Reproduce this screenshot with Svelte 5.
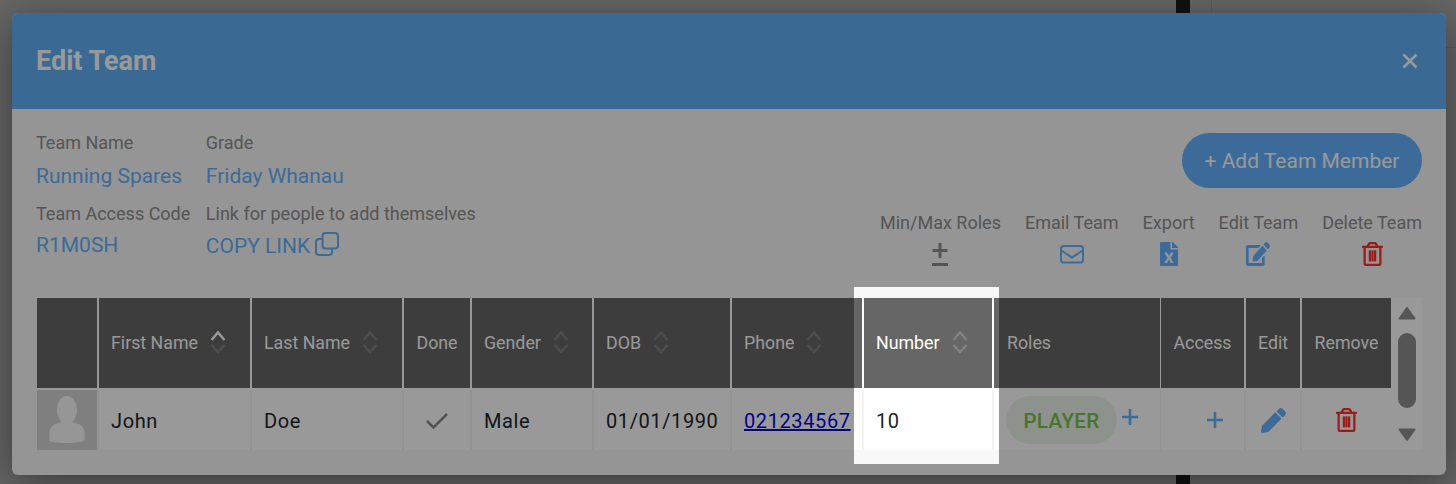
<script>
  const sortCols = new Set(['First Name','Last Name','Gender','DOB','Phone','Number']);
  const heads = [
    { t: '', c: 'avatar-h' },
    { t: 'First Name', active: true },
    { t: 'Last Name' },
    { t: 'Done', c: 'ctr' },
    { t: 'Gender' },
    { t: 'DOB' },
    { t: 'Phone' },
    { t: 'Number', c: 'num' },
    { t: 'Roles', c: 'rh' },
    { t: 'Access', c: 'ctr access' },
    { t: 'Edit', c: 'ctr' },
    { t: 'Remove', c: 'ctr' }
  ];
  const actions = ['Min/Max Roles', 'Email Team', 'Export', 'Edit Team', 'Delete Team'];
  const trash = "M268 416h24a12 12 0 0 0 12-12V188a12 12 0 0 0-12-12h-24a12 12 0 0 0-12 12v216a12 12 0 0 0 12 12zM432 80h-82.41l-34-56.7A48 48 0 0 0 274.41 0H173.59a48 48 0 0 0-41.16 23.3L98.41 80H16A16 16 0 0 0 0 96v16a16 16 0 0 0 16 16h16v336a48 48 0 0 0 48 48h288a48 48 0 0 0 48-48V128h16a16 16 0 0 0 16-16V96a16 16 0 0 0-16-16zM171.84 50.91A6 6 0 0 1 177 48h94a6 6 0 0 1 5.15 2.91L293.61 80H154.39zM368 464H80V128h288zm-212-48h24a12 12 0 0 0 12-12V188a12 12 0 0 0-12-12h-24a12 12 0 0 0-12 12v216a12 12 0 0 0 12 12zm56 0h24a12 12 0 0 0 12-12V188a12 12 0 0 0-12-12h-24a12 12 0 0 0-12 12v216a12 12 0 0 0 12 12z";
</script>

<div class="page">
  <div class="bar top"></div>
  <div class="bar bottom"></div>
  <div class="line-v"></div>
  <div class="line-h"></div>

  <section class="modal">
    <header class="head">
      <h1>Edit Team</h1>
      <svg class="close" viewBox="0 0 16 16" width="16" height="16"><path d="M1.5 1.5l13 13M14.5 1.5l-13 13" /></svg>
    </header>

    <div class="body">
      <div class="top">
        <div class="info">
          <div class="label">Team Name</div>
          <div class="label">Grade</div>
          <div class="value">Running Spares</div>
          <div class="value">Friday Whanau</div>
          <div class="label second">Team Access Code</div>
          <div class="label second">Link for people to add themselves</div>
          <div class="value third">R1M0SH</div>
          <div class="value third copy">COPY LINK
            <svg viewBox="0 0 24 24" width="24" height="24"><rect x="7.5" y="1" width="15.5" height="15.5" rx="3" /><path d="M7.5 7H4a3 3 0 0 0-3 3v10a3 3 0 0 0 3 3h10a3 3 0 0 0 3-3v-3.500" /></svg>
          </div>
        </div>

        <div class="side">
          <button class="add">+ Add Team Member</button>
          <div class="actions">
            {#each actions as a, i}
              <div class="action">
                <span>{a}</span>
                {#if i === 0}
                  <svg class="ic pm" viewBox="0 0 18 24" width="18" height="24"><path d="M9 1v15M1.500 8.500h15M1 22.500h16" /></svg>
                {:else if i === 1}
                  <svg class="ic env" viewBox="0 0 24 24" width="24" height="24"><rect x="1" y="4" width="22" height="16.500" rx="2.500" /><path d="M1.500 8.500l10.500 7 10.500-7" /></svg>
                {:else if i === 2}
                  <svg class="ic blue" viewBox="0 0 384 512" width="18" height="24"><path d="M224 136V0H24C10.700 0 0 10.700 0 24v464c0 13.300 10.700 24 24 24h336c13.300 0 24-10.700 24-24V160H248c-13.200 0-24-10.800-24-24zm60.100 106.500L224 336l60.100 93.500c5.100 8-.6 18.500-10.100 18.500h-34.900c-4.400 0-8.500-2.400-10.600-6.300C208.900 405.500 192 373 192 373c-6.400 14.800-10 20-36.600 68.800-2.100 3.900-6.100 6.300-10.500 6.300H110c-9.500 0-15.200-10.500-10.100-18.500l60.300-93.500-60.300-93.500c-5.200-8 .6-18.500 10.100-18.500h34.800c4.400 0 8.500 2.400 10.600 6.300 26.100 48.800 20 33.600 36.600 68.500 0 0 6.100-11.700 36.600-68.500 2.100-3.900 6.200-6.300 10.600-6.300H274c9.500-.1 15.200 10.400 10.100 18.400zM384 121.900v6.100H256V0h6.100c6.400 0 12.500 2.500 17 7l97.900 98c4.500 4.500 7 10.600 7 16.900z" /></svg>
                {:else if i === 3}
                  <svg class="ic blue" viewBox="0 0 576 512" width="24" height="24" preserveAspectRatio="none"><path d="M402.600 83.200l90.200 90.200c3.800 3.800 3.800 10 0 13.800L274.400 405.600l-92.800 10.300c-12.400 1.400-22.900-9.100-21.500-21.500l10.300-92.800L388.800 83.200c3.800-3.800 10-3.800 13.800 0zm162-22.900l-48.800-48.800c-15.200-15.200-39.900-15.200-55.200 0l-35.400 35.400c-3.800 3.800-3.800 10 0 13.800l90.200 90.200c3.800 3.800 10 3.800 13.800 0l35.400-35.400c15.200-15.300 15.200-40 0-55.200zM384 346.200V448H64V128h229.800c3.200 0 6.200-1.300 8.500-3.500l40-40c7.600-7.600 2.200-20.500-8.500-20.500H48C21.500 64 0 85.500 0 112v352c0 26.500 21.500 48 48 48h352c26.500 0 48-21.500 48-48V306.200c0-10.700-12.900-16-20.500-8.500l-40 40c-2.200 2.300-3.500 5.300-3.500 8.500z" /></svg>
                {:else}
                  <svg class="ic red" viewBox="0 0 448 512" width="21" height="24"><path d={trash} /></svg>
                {/if}
              </div>
            {/each}
          </div>
        </div>
      </div>

      <div class="table-wrap">
        <div class="table">
          <div class="grid thead">
            {#each heads as h}
              <div class="th {h.c ?? ''}">
                <span>{h.t}</span>
                {#if sortCols.has(h.t)}
                  <svg class="sort" viewBox="0 0 16 24" width="16" height="24">
                    <path class:on={h.active} d="M1.500 10L8 2.500 14.500 10" />
                    <path d="M1.500 15L8 22 14.500 15" />
                  </svg>
                {/if}
              </div>
            {/each}
          </div>
          <div class="grid tbody">
            <div class="td photo">
              <svg viewBox="0 0 60 60" width="60" height="60"><ellipse cx="30" cy="20" rx="10" ry="14" /><path d="M12.500 50c-.8-10 1-14 6-16 3-1.200 6-1.500 7.500-3h8c1.500 1.500 4.500 1.800 7.500 3 5 2 6.800 6 6 16-.2 2-8 3-18 3s-17.800-1-17.500-3z" /></svg>
            </div>
            <div class="td">John</div>
            <div class="td">Doe</div>
            <div class="td ctr"><svg class="check" viewBox="0 0 22 17" width="22" height="17"><path d="M1 9l6.500 6.500L21 2" /></svg></div>
            <div class="td">Male</div>
            <div class="td">01/01/1990</div>
            <div class="td"><a href="#top">021234567</a></div>
            <div class="td">10</div>
            <div class="td roles">
              <span class="pill">PLAYER</span>
              <svg class="plus" viewBox="0 0 18 18" width="18" height="18"><path d="M9 1v16M1 9h16" /></svg>
            </div>
            <div class="td access-c"><svg class="plus" viewBox="0 0 18 18" width="18" height="18"><path d="M9 1v16M1 9h16" /></svg></div>
            <div class="td ctr"><svg class="ic blue" viewBox="0 0 512 512" width="25" height="25"><path d="M497.900 142.100l-46.100 46.100c-4.700 4.700-12.300 4.700-17 0l-111-111c-4.700-4.700-4.700-12.300 0-17l46.100-46.100c18.700-18.700 49.100-18.700 67.900 0l60.100 60.100c18.800 18.700 18.800 49.100 0 67.900zM284.200 99.800L21.600 362.400.4 483.900c-2.900 16.400 11.400 30.600 27.800 27.800l121.500-21.300 262.600-262.600c4.700-4.700 4.700-12.300 0-17l-111-111c-4.800-4.700-12.400-4.700-17.100 0z" /></svg></div>
            <div class="td ctr"><svg class="ic red" viewBox="0 0 448 512" width="21" height="24"><path d={trash} /></svg></div>
          </div>
        </div>
        <div class="scroll">
          <svg viewBox="0 0 18 14" width="18" height="14"><path d="M9 2L1.500 12.500h15z" /></svg>
          <div class="thumb"></div>
          <svg viewBox="0 0 18 14" width="18" height="14"><path d="M9 12L1.500 1.500h15z" /></svg>
        </div>
      </div>
    </div>
  </section>

  <div class="spot"></div>
</div>

<style>
  :global(body) { margin: 0; }
  .page {
    position: relative;
    box-sizing: border-box;
    width: 1456px;
    height: 484px;
    overflow: hidden;
    padding: 13px 10px 0 12px;
    background: #ababab;
    font-family: Roboto, sans-serif;
    color: #212529;
  }
  .bar { position: absolute; left: 1176px; width: 14px; background: #1c1c1c; }
  .bar.top { top: 0; height: 13px; }
  .bar.bottom { top: 475px; height: 9px; }
  .line-v { position: absolute; left: 1211px; top: 0; width: 1px; height: 13px; background: #999; }
  .line-h { position: absolute; left: 1446px; top: 47px; width: 10px; height: 1px; background: #999; }

  .modal {
    position: relative;
    height: 462px;
    border-radius: 6px;
    overflow: hidden;
    background: #f8f8f8;
    box-shadow: 0 8px 40px rgba(0, 0, 0, 0.45);
  }
  .head {
    height: 96px;
    display: flex;
    align-items: center;
    justify-content: space-between;
    padding: 0 28px 0 24px;
    background: #62aff7;
    color: #fff;
  }
  h1 { margin: 0; font-size: 27px; font-weight: 700; line-height: 1; }
  .close { fill: none; stroke: #fff; stroke-width: 2.6; }

  .body { padding: 0 24px; }
  .top { height: 189px; display: flex; justify-content: space-between; }
  .info {
    display: grid;
    grid-template-columns: auto auto;
    column-gap: 15.5px;
    align-content: start;
    padding-top: 22px;
  }
  .label { font-size: 18px; line-height: 24px; color: #8e8e8e; }
  .value { margin-top: 9px; font-size: 21px; line-height: 24px; color: #66b3ff; }
  .label.second { margin-top: 14px; }
  .value.third { margin-top: 7px; }
  .value.copy { margin-top: 8px; display: flex; gap: 5px; align-items: center; }
  .copy svg { fill: none; stroke: #66b3ff; stroke-width: 2; margin-top: -4px; }

  .side { display: flex; flex-direction: column; align-items: flex-end; padding-top: 24px; }
  .add {
    box-sizing: border-box;
    width: 240px;
    height: 55px;
    padding: 2px 0 0;
    border: 0;
    border-radius: 28px;
    background: #66b3ff;
    color: #fff;
    font: 400 21px/1 Roboto, sans-serif;
  }
  .actions { display: flex; gap: 24px; margin-top: 23px; }
  .action {
    display: flex;
    flex-direction: column;
    align-items: center;
    gap: 7px;
    font-size: 18px;
    line-height: 24px;
    color: #8e8e8e;
  }
  .ic { display: block; }
  .blue { fill: #66b3ff; }
  .red { fill: #ff3028; }
  .pm { fill: none; stroke: #8e8e8e; stroke-width: 3; }
  .env { fill: none; stroke: #66b3ff; stroke-width: 2; }

  .table-wrap { display: flex; width: 1385px; margin-left: 1px; }
  .table { width: 1354px; background: #fff; }
  .grid {
    display: grid;
    grid-template-columns: 60px 151px 150px 66px 120px 136px 130px 128px 166px 82px 54px 89px;
    column-gap: 2px;
  }
  .thead { height: 90px; background: #fff; margin-bottom: 2px; }
  .tbody { height: 60px; background: #f3f3f3; }
  .th {
    box-sizing: border-box;
    display: flex;
    align-items: center;
    gap: 12px;
    padding: 0 0 2px 12px;
    background: #666;
    color: #fff;
    font-size: 17.8px;
  }
  .th.ctr { justify-content: center; padding-left: 0; }
  .th.rh { padding-left: 13px; }
  .th.access, .access-c { margin-left: -1px; }
  .sort { fill: none; stroke: rgba(255, 255, 255, 0.18); stroke-width: 2.500; }
  .sort .on { stroke: #fff; }
  .td {
    display: flex;
    align-items: center;
    padding-left: 12px;
    padding-top: 2px;
    box-sizing: border-box;
    background: #fff;
    font-size: 20px;
    letter-spacing: 0.6px;
  }
  .td.ctr { justify-content: center; padding-left: 0; padding-top: 0; }
  .td a { color: #0000ee; }
  .td.photo { padding: 0; background: #d4d4d4; }
  .photo svg { fill: #fafafa; }
  .check { fill: none; stroke: #8a8a8a; stroke-width: 2.500; }
  .td.roles { padding-left: 12px; gap: 4px; align-items: flex-start; padding-top: 6px; }
  .pill {
    box-sizing: border-box;
    display: flex;
    align-items: center;
    justify-content: center;
    width: 111px;
    height: 48px;
    padding-top: 2px;
    border-radius: 24px;
    background: #edf4e9;
    color: #78c24c;
    font-weight: 500;
    font-size: 20.5px;
    letter-spacing: 0.4px;
  }
  .roles .plus { margin-top: 12px; }
  .plus { fill: none; stroke: #66b3ff; stroke-width: 2.600; }
  .td.access-c { justify-content: flex-end; padding: 0 20px 0 0; }

  .scroll {
    box-sizing: border-box;
    width: 31px;
    height: 152px;
    display: flex;
    flex-direction: column;
    align-items: center;
    padding-top: 8px;
    background: #fff;
  }
  .scroll svg { fill: #8f8f8f; stroke: #8f8f8f; stroke-width: 2; stroke-linejoin: round; flex: none; }
  .thumb { width: 18px; height: 75px; margin: 13px 0 20px; border-radius: 9px; background: #8f8f8f; }

  .spot {
    position: absolute;
    left: 854px;
    top: 287px;
    width: 145px;
    height: 177px;
    box-shadow: 0 0 0 2000px rgba(0, 0, 0, 0.4);
  }
</style>
